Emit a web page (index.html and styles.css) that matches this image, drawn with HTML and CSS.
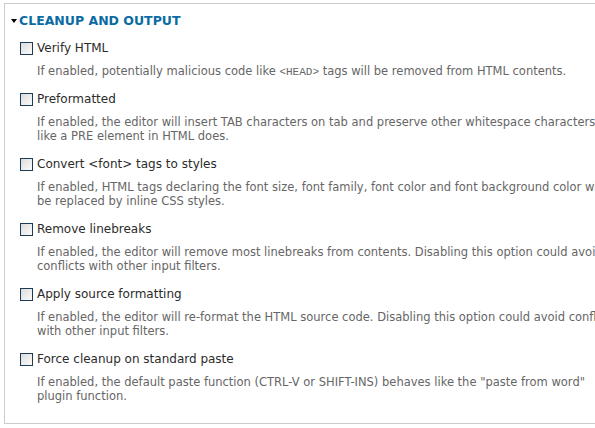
FILE: index.html
```html
<!DOCTYPE html>
<html lang="en">
<head>
	<meta charset="UTF-8">
	<title>Cleanup and output</title>
	<link rel="stylesheet" href="styles.css">
</head>
<body>
<div class="fieldset">
	<div class="legend"><span class="arrow"></span>Cleanup and output</div>
	<div class="items">
		<div class="item">
			<label><span class="box"></span>Verify HTML</label>
			<div class="desc">If enabled, potentially malicious code like <code>&lt;HEAD&gt;</code> tags will be removed from HTML contents.</div>
		</div>
		<div class="item">
			<label><span class="box"></span>Preformatted</label>
			<div class="desc">If enabled, the editor will insert TAB characters on tab and preserve other whitespace characters just<br>like a PRE element in HTML does.</div>
		</div>
		<div class="item">
			<label><span class="box"></span>Convert &lt;font&gt; tags to styles</label>
			<div class="desc">If enabled, HTML tags declaring the font size, font family, font color and font background color will<br>be replaced by inline CSS styles.</div>
		</div>
		<div class="item">
			<label><span class="box"></span>Remove linebreaks</label>
			<div class="desc">If enabled, the editor will remove most linebreaks from contents. Disabling this option could avoid<br>conflicts with other input filters.</div>
		</div>
		<div class="item">
			<label><span class="box"></span>Apply source formatting</label>
			<div class="desc">If enabled, the editor will re-format the HTML source code. Disabling this option could avoid conflicts<br>with other input filters.</div>
		</div>
		<div class="item">
			<label><span class="box"></span>Force cleanup on standard paste</label>
			<div class="desc">If enabled, the default paste function (CTRL-V or SHIFT-INS) behaves like the "paste from word"<br>plugin function.</div>
		</div>
	</div>
</div>
</body>
</html>
```

FILE: styles.css
```css
html, body {
	margin: 0;
	padding: 0;
	background: #fff;
	font-family: "DejaVu Sans", Verdana, sans-serif;
	overflow: hidden;
}

body {
	width: 595px;
	height: 428px;
}

.fieldset {
	margin: 3px -60px 0 4px;
	height: 421px;
	box-sizing: border-box;
	border: 1px solid #cccccc;
	padding: 10px 0 0 5px;
	overflow: hidden;
}

.legend {
	display: flex;
	align-items: center;
	font-size: 12.5px;
	font-weight: bold;
	text-transform: uppercase;
	color: #0b6ba3;
	line-height: 14px;
	white-space: nowrap;
}

.legend .arrow {
	width: 0;
	height: 0;
	border-left: 3.5px solid transparent;
	border-right: 3.5px solid transparent;
	border-top: 4px solid #000;
	margin: 0 2px 0 1px;
}

.items {
	padding: 13px 0 0 10px;
}

.item {
	margin-bottom: 14px;
}

.item label {
	display: flex;
	align-items: center;
	font-size: 12px;
	color: #2b2b2b;
	line-height: 14px;
	white-space: nowrap;
}

.item .box {
	width: 11px;
	height: 11px;
	border: 1px solid #1c3b57;
	background: linear-gradient(135deg, #dcdcdc, #fbfbfb);
	margin-right: 4px;
	flex: none;
}

.desc {
	margin: 9px 0 0 17px;
	font-size: 11.5px;
	color: #666;
	line-height: 14px;
	white-space: nowrap;
}

.desc code {
	font-family: "Liberation Mono", monospace;
	font-size: 11px;
	line-height: 1;
}
```
